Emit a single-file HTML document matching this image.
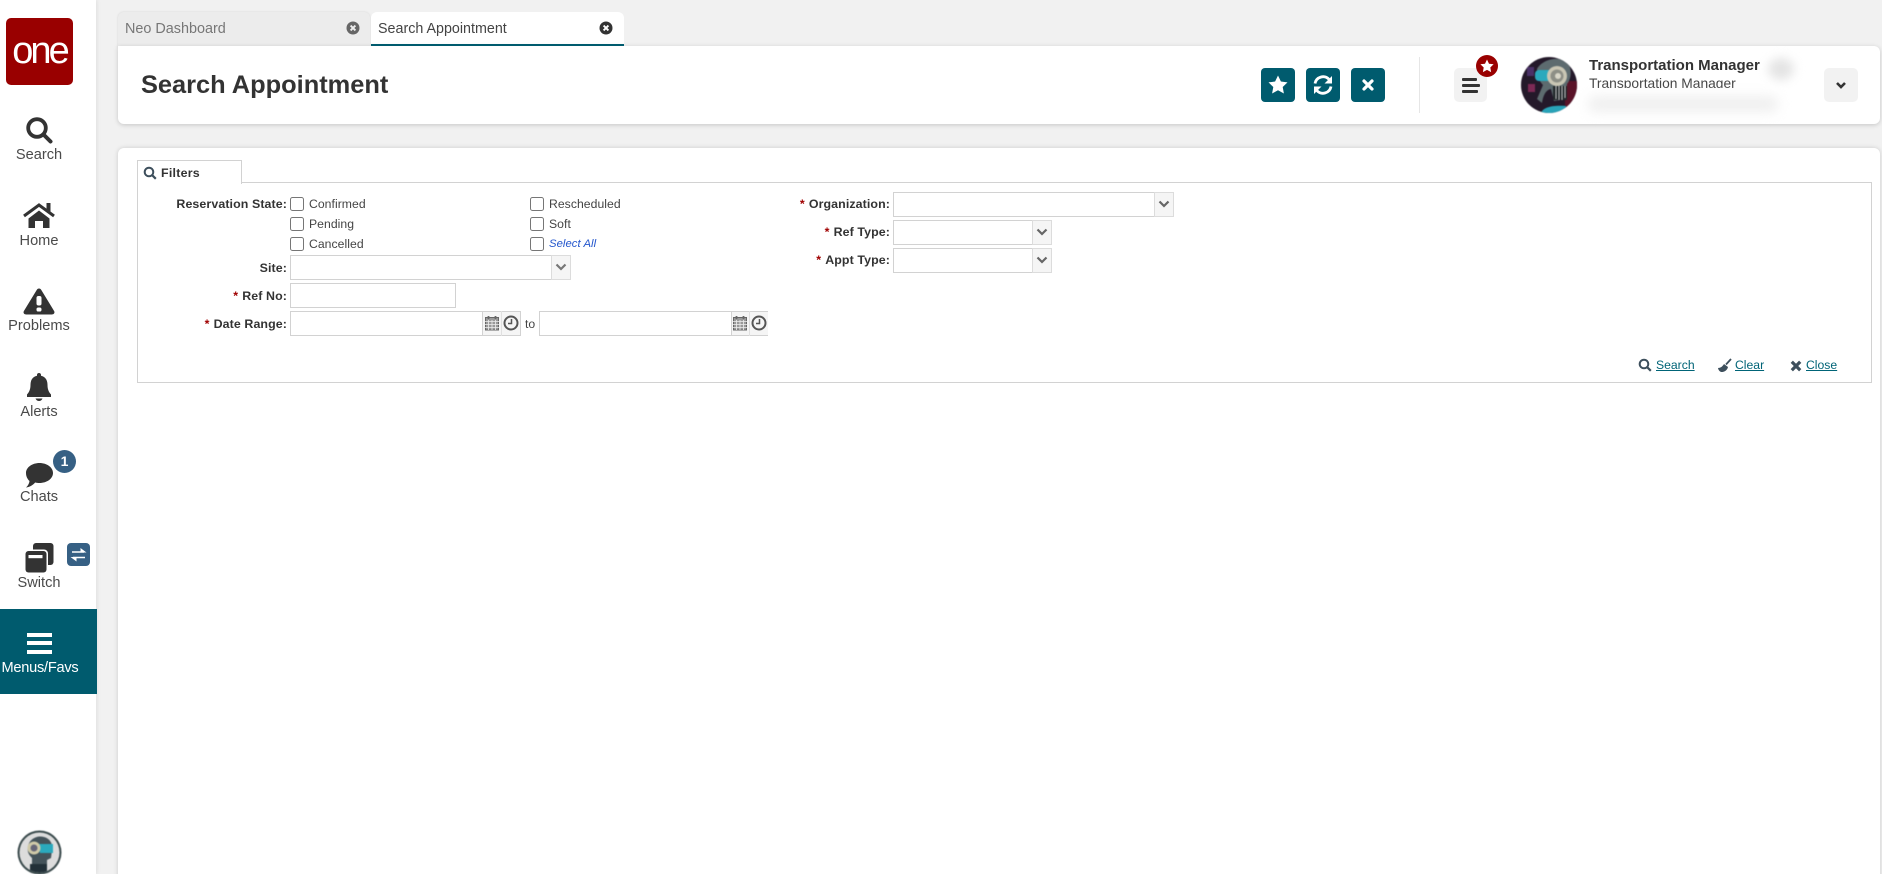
<!DOCTYPE html>
<html><head><meta charset="utf-8"><title>Search Appointment</title>
<style>
html,body{margin:0;padding:0;width:1882px;height:874px;overflow:hidden;background:#f1f1f1;font-family:"Liberation Sans",Arial,sans-serif;color:#333}
div,span,a,svg{position:absolute;white-space:nowrap}
#page{left:0;top:0;width:1882px;height:874px;overflow:hidden;background:#f1f1f1}
.side{left:0;top:0;width:96px;height:874px;background:#fff;box-shadow:1px 0 4px rgba(0,0,0,.08)}
.nl{left:0;width:78px;text-align:center;font-size:14.6px;line-height:18px;color:#4a4a4a}
.lb{font-size:12.4px;line-height:16px;font-weight:bold;color:#333;text-align:right;letter-spacing:.1px}
.lb i{color:#a00000;font-style:normal;margin-right:4px}
.ck{width:12px;height:12px;border:1px solid #767676;border-radius:2.5px;background:#fff}
.cl{font-size:12.2px;line-height:16px;color:#444;letter-spacing:.05px}
.inp{background:#fff;border:1px solid #d2d2d2;box-sizing:border-box;height:25px}
.btn{top:-1px;bottom:-1px;background:#f5f5f5;border:1px solid #dcdcdc;box-sizing:border-box;right:-1px;width:20px}
.tb{width:34px;height:34px;top:68px;border-radius:4px;background:#005b6e}
.lk{font-size:12.2px;line-height:16px;color:#006477;text-decoration:underline;top:357px}
</style></head><body>
<div id="page">

<!-- tabs -->
<div style="left:118px;top:12px;width:252px;height:36px;background:#ececec;border-radius:6px 6px 0 0;box-shadow:0 0 2px rgba(0,0,0,.12)"></div>
<div style="left:125px;top:20px;font-size:14.4px;line-height:18px;color:#777">Neo Dashboard</div>
<svg style="left:346px;top:21px" width="14" height="14" viewBox="0 0 14 14"><circle cx="7" cy="7" r="6.5" fill="#666"/><path d="M4.600 4.600l4.800 4.800M9.400 4.600l-4.800 4.800" stroke="#eee" stroke-width="1.900"/></svg>
<div style="left:371px;top:12px;width:253px;height:34px;background:#fff;border-radius:6px 6px 0 0"></div>
<div style="left:378px;top:20px;font-size:14.3px;line-height:18px;color:#444">Search Appointment</div>
<svg style="left:599px;top:21px" width="14" height="14" viewBox="0 0 14 14"><circle cx="7" cy="7" r="6.500" fill="#333"/><path d="M4.600 4.600l4.800 4.800M9.400 4.600l-4.800 4.800" stroke="#fff" stroke-width="1.900"/></svg>

<!-- header -->
<div style="left:118px;top:46px;width:1762px;height:78px;background:#fff;border-radius:0 6px 6px 6px;box-shadow:0 1px 5px rgba(0,0,0,.18)"></div>
<div style="left:371px;top:44px;width:253px;height:2px;background:#005b6e"></div>
<div style="left:141px;top:69px;font-size:25.4px;line-height:32px;font-weight:bold;color:#333">Search Appointment</div>

<div class="tb" style="left:1261px"></div>
<svg style="left:1261px;top:68px" width="34" height="34" viewBox="0 0 34 34"><path d="M17 7.500l2.900 6 6.600.9-4.800 4.600 1.200 6.500-5.900-3.200-5.900 3.200 1.200-6.500-4.800-4.600 6.600-.9z" fill="#fff"/></svg>
<div class="tb" style="left:1306px"></div>
<svg style="left:1306px;top:68px" width="34" height="34" viewBox="0 0 34 34" fill="none"><path d="M9 15.500a8.200 8.200 0 0 1 14-4.200l2 2" stroke="#fff" stroke-width="2.800"/><path d="M26 8v7.500h-7.500z" fill="#fff"/><path d="M25 18.500a8.200 8.200 0 0 1-14 4.200l-2-2" stroke="#fff" stroke-width="2.800"/><path d="M8 26v-7.500h7.500z" fill="#fff"/></svg>
<div class="tb" style="left:1351px"></div>
<svg style="left:1351px;top:68px" width="34" height="34" viewBox="0 0 34 34"><path d="M13 13l8 8M21 13l-8 8" stroke="#fff" stroke-width="3.200" stroke-linecap="round"/></svg>

<div style="left:1419px;top:57px;width:1px;height:56px;background:#e6e6e6"></div>

<div style="left:1454px;top:68px;width:33px;height:34px;border-radius:5px;background:#f2f2f2"></div>
<div style="left:1462px;top:78px;width:15px;height:3px;background:#333;border-radius:1px"></div>
<div style="left:1462px;top:84px;width:18px;height:3px;background:#333;border-radius:1px"></div>
<div style="left:1462px;top:90px;width:16px;height:3px;background:#333;border-radius:1px"></div>
<div style="left:1476px;top:55px;width:22px;height:22px;border-radius:50%;background:#990000"></div>
<svg style="left:1476px;top:55px" width="22" height="22" viewBox="0 0 22 22"><path d="M11 4.500l2 4.200 4.600.6-3.300 3.200.8 4.600-4.100-2.200-4.100 2.200.8-4.600-3.300-3.200 4.600-.6z" fill="#fff"/></svg>

<!-- avatar -->
<svg style="left:1521px;top:57px;filter:blur(.5px)" width="56" height="56" viewBox="0 0 56 56">
<defs><clipPath id="c1"><circle cx="28" cy="28" r="28"/></clipPath></defs>
<g clip-path="url(#c1)">
<rect width="56" height="56" fill="#24192a"/>
<rect x="6" y="10" width="7" height="9" fill="#4a3168"/><rect x="7" y="27" width="7" height="8" fill="#7c2a55"/>
<rect x="44" y="24" width="12" height="32" fill="#5a1328"/>
<path d="M16 12C22 1 42-2 48 8c3 6 2 14-2 19l-1 15-12 2-3-12c-6 1-8 8-9 14l-5-4 6-14c-3-3-6-8-6-16z" fill="#5d6b6f"/>
<rect x="14" y="13" width="18" height="11" rx="4" fill="#2aa9bd"/>
<circle cx="36" cy="19" r="10" fill="#c9c6b4"/><circle cx="36" cy="19" r="6.500" fill="#8d8f86"/><circle cx="37" cy="19" r="3" fill="#d8d6c8"/>
<path d="M32 29h14v14H32z" fill="#242a2c"/><path d="M35 29v13M38 29v14M41 29v14M44 29v12" stroke="#c4c4c4" stroke-width="1"/>
<path d="M20 56c2-6 12-8 25-7v7z" fill="#29a3b8"/>
</g></svg>

<div style="left:1589px;top:57px;font-size:15px;line-height:18px;font-weight:bold;color:#333">Transportation Manager</div>
<div style="left:1589px;top:75px;font-size:13.8px;line-height:18px;color:#444">Transportation Manager</div>
<div style="left:1760px;top:56px;width:48px;height:26px;background:#fff"></div>
<div style="left:1768px;top:58px;width:26px;height:22px;background:#e4e4e4;border-radius:50%;filter:blur(5px)"></div>
<div style="left:1583px;top:88px;width:205px;height:32px;background:#fff"></div>
<div style="left:1588px;top:96px;width:190px;height:16px;background:#efefef;border-radius:7px;filter:blur(6px)"></div>

<div style="left:1824px;top:68px;width:34px;height:34px;border-radius:5px;background:#f2f2f2"></div>
<svg style="left:1824px;top:68px" width="34" height="34" viewBox="0 0 34 34" fill="none"><path d="M13 15l4 4 4-4" stroke="#333" stroke-width="2.600"/></svg>

<!-- main panel -->
<div style="left:118px;top:148px;width:1762px;height:740px;background:#fff;border-radius:6px;box-shadow:0 0 5px rgba(0,0,0,.16)"></div>

<!-- filter box -->
<div style="left:137px;top:182px;width:1733px;height:199px;border:1px solid #d2d2d2"></div>
<div style="left:137px;top:160px;width:103px;height:23px;background:#fff;border:1px solid #d2d2d2;border-bottom:none"></div>
<svg style="left:143px;top:166px" width="14" height="14" viewBox="0 0 14 14" fill="none"><circle cx="6" cy="6" r="4.300" stroke="#3d4f5c" stroke-width="2"/><path d="M9.200 9.200l3.600 3.600" stroke="#3d4f5c" stroke-width="2.200"/></svg>
<div style="left:161px;top:165px;font-size:12.4px;line-height:16px;font-weight:bold;color:#333;letter-spacing:.25px">Filters</div>

<div class="lb" style="right:1595px;top:196px">Reservation State:</div>
<div class="ck" style="left:290px;top:197px"></div><div class="cl" style="left:309px;top:196px">Confirmed</div>
<div class="ck" style="left:290px;top:217px"></div><div class="cl" style="left:309px;top:216px">Pending</div>
<div class="ck" style="left:290px;top:237px"></div><div class="cl" style="left:309px;top:236px">Cancelled</div>
<div class="ck" style="left:530px;top:197px"></div><div class="cl" style="left:549px;top:196px">Rescheduled</div>
<div class="ck" style="left:530px;top:217px"></div><div class="cl" style="left:549px;top:216px">Soft</div>
<div class="ck" style="left:530px;top:237px"></div><div class="cl" style="left:549px;top:236px;color:#2255cc;font-style:italic;font-size:11.300px">Select All</div>

<div class="lb" style="right:1595px;top:260px">Site:</div>
<div class="inp" style="left:290px;top:255px;width:281px"><div class="btn"></div></div>
<svg style="left:552px;top:261px" width="18" height="12" viewBox="0 0 18 12" fill="none"><path d="M4.500 3.500l4.500 4.500 4.500-4.500" stroke="#777" stroke-width="2.200"/></svg>

<div class="lb" style="right:1595px;top:288px"><i>*</i>Ref No:</div>
<div class="inp" style="left:290px;top:283px;width:166px"></div>

<div class="lb" style="right:1595px;top:316px"><i>*</i>Date Range:</div>
<div class="inp" style="left:290px;top:311px;width:193px"></div>
<div style="left:482px;top:311px;width:39px;height:25px;background:#f5f5f5;border:1px solid #d2d2d2;box-sizing:border-box"></div>
<div style="left:501px;top:311px;width:1px;height:25px;background:#e0e0e0"></div>
<svg style="left:485px;top:315px" width="14" height="16" viewBox="0 0 14 16" fill="none"><rect x=".5" y="2.500" width="13" height="12.500" fill="#999" stroke="#666"/><path d="M0 6.500h14M0 9.500h14M0 12.500h14M3.500 5v10M7 5v10M10.500 5v10" stroke="#eee" stroke-width=".8"/><path d="M3.500 1v3M10.500 1v3" stroke="#666" stroke-width="1.800"/></svg>
<svg style="left:503px;top:315px" width="16" height="16" viewBox="0 0 16 16" fill="none"><circle cx="8" cy="8" r="6.500" stroke="#555" stroke-width="2"/><path d="M8.500 4v4.500H5" stroke="#555" stroke-width="1.500"/></svg>
<div class="cl" style="left:525px;top:316px">to</div>
<div class="inp" style="left:539px;top:311px;width:193px"></div>
<div style="left:731px;top:311px;width:37px;height:25px;background:#f5f5f5;border:1px solid #d2d2d2;border-right:none;box-sizing:border-box"></div>
<div style="left:749px;top:311px;width:1px;height:25px;background:#e0e0e0"></div>
<svg style="left:733px;top:315px" width="14" height="16" viewBox="0 0 14 16" fill="none"><rect x=".5" y="2.500" width="13" height="12.500" fill="#999" stroke="#666"/><path d="M0 6.500h14M0 9.500h14M0 12.500h14M3.500 5v10M7 5v10M10.500 5v10" stroke="#eee" stroke-width=".8"/><path d="M3.500 1v3M10.500 1v3" stroke="#666" stroke-width="1.800"/></svg>
<svg style="left:751px;top:315px" width="16" height="16" viewBox="0 0 16 16" fill="none"><circle cx="8" cy="8" r="6.500" stroke="#555" stroke-width="2"/><path d="M8.500 4v4.500H5" stroke="#555" stroke-width="1.500"/></svg>

<div class="lb" style="right:992px;top:196px"><i>*</i>Organization:</div>
<div class="inp" style="left:893px;top:192px;width:281px"><div class="btn"></div></div>
<svg style="left:1155px;top:198px" width="18" height="12" viewBox="0 0 18 12" fill="none"><path d="M4.500 3.500l4.500 4.500 4.500-4.500" stroke="#666" stroke-width="2.200"/></svg>
<div class="lb" style="right:992px;top:224px"><i>*</i>Ref Type:</div>
<div class="inp" style="left:893px;top:220px;width:159px"><div class="btn"></div></div>
<svg style="left:1033px;top:226px" width="18" height="12" viewBox="0 0 18 12" fill="none"><path d="M4.500 3.500l4.500 4.500 4.500-4.500" stroke="#666" stroke-width="2.200"/></svg>
<div class="lb" style="right:992px;top:252px"><i>*</i>Appt Type:</div>
<div class="inp" style="left:893px;top:248px;width:159px"><div class="btn"></div></div>
<svg style="left:1033px;top:254px" width="18" height="12" viewBox="0 0 18 12" fill="none"><path d="M4.500 3.500l4.500 4.500 4.500-4.500" stroke="#666" stroke-width="2.200"/></svg>

<!-- actions -->
<svg style="left:1638px;top:358px" width="14" height="14" viewBox="0 0 14 14" fill="none"><circle cx="6" cy="6" r="4.300" stroke="#3d4f5c" stroke-width="2"/><path d="M9.200 9.200l3.600 3.600" stroke="#3d4f5c" stroke-width="2.200"/></svg>
<a class="lk" style="left:1656px">Search</a>
<svg style="left:1717px;top:358px" width="16" height="15" viewBox="0 0 16 15"><path d="M14 1L9 6.500" stroke="#3d4f5c" stroke-width="1.800"/><path d="M1 10c2.500 0 4.500-1.500 6-4l4 3c-.5 2.500-2.500 4.500-5.500 5C3 14.200 1.500 12.500 1 10z" fill="#3d4f5c"/></svg>
<a class="lk" style="left:1735px">Clear</a>
<svg style="left:1790px;top:360px" width="12" height="12" viewBox="0 0 12 12"><path d="M1.800 1.800l8.400 8.400M10.200 1.800l-8.400 8.400" stroke="#3d4f5c" stroke-width="3.200"/></svg>
<a class="lk" style="left:1806px">Close</a>

<!-- sidebar -->
<div class="side"></div>
<div style="left:6px;top:18px;width:67px;height:67px;background:#990000;border-radius:5px"></div>
<div style="left:6px;top:29px;width:67px;text-align:center;font-size:38px;line-height:44px;color:#fff;letter-spacing:-3px">one</div>

<svg style="left:25px;top:116px" width="28" height="28" viewBox="0 0 28 28" fill="none"><circle cx="12" cy="12" r="8.800" stroke="#333" stroke-width="3.800"/><path d="M18.500 18.500l7 7" stroke="#333" stroke-width="4" stroke-linecap="round"/></svg>
<div class="nl" style="top:146px">Search</div>

<svg style="left:23px;top:203px" width="32" height="25" viewBox="0 0 32 25"><path d="M1 13L16 2l15 11" fill="none" stroke="#333" stroke-width="3"/><path d="M23.500 0h4v9l-4-3z" fill="#333"/><path d="M5.500 15.500L16 7.500l10.500 8V25H20v-7h-8v7H5.500z" fill="#333"/></svg>
<div class="nl" style="top:232px">Home</div>

<svg style="left:23px;top:288px" width="32" height="27" viewBox="0 0 32 27"><path d="M16 .5c1 0 1.800.6 2.300 1.500l12.800 21c1 1.800-.2 3.500-2.200 3.500H3.100c-2 0-3.200-1.700-2.200-3.500L13.700 2c.5-.9 1.300-1.500 2.300-1.500z" fill="#333"/><rect x="13.500" y="8" width="5" height="9.500" rx="2" fill="#fff"/><rect x="13.500" y="19.500" width="5" height="4" rx="1.800" fill="#fff"/></svg>
<div class="nl" style="top:317px">Problems</div>

<svg style="left:26px;top:372px" width="26" height="30" viewBox="0 0 26 30"><path d="M13 1c1.200 0 2 .8 2 1.800v1c4.500 1 6.500 4.500 6.500 9 0 5 1.500 7.500 3.500 9.700V25H1v-2.500c2-2.200 3.500-4.700 3.500-9.700 0-4.500 2-8 6.500-9v-1c0-1 .8-1.800 2-1.800z" fill="#333"/><path d="M9.500 26.500h7c-.5 1.500-2 2.500-3.500 2.500s-3-1-3.500-2.500z" fill="#333"/></svg>
<div class="nl" style="top:403px">Alerts</div>

<svg style="left:25px;top:462px" width="29" height="26" viewBox="0 0 29 26"><path d="M14.500 1C22 1 28 5.500 28 11s-6 10-13.500 10c-1.500 0-3-.2-4.300-.5C8 23 5 25 1 25.500c2-1.800 3.200-4 3.500-6.500C2.300 17 1 14.200 1 11 1 5.500 7 1 14.500 1z" fill="#333"/></svg>
<div style="left:53px;top:450px;width:23px;height:23px;border-radius:50%;background:#366084"></div>
<div style="left:53px;top:451px;width:23px;text-align:center;font-size:14px;line-height:20px;font-weight:bold;color:#fff">1</div>
<div class="nl" style="top:488px">Chats</div>

<svg style="left:25px;top:543px" width="29" height="30" viewBox="0 0 29 30"><rect x="8" y="0" width="20.500" height="22" rx="3" fill="#333"/><rect x="-1" y="6.500" width="24" height="24.500" rx="4" fill="#fff"/><rect x="0.500" y="8" width="21" height="21.500" rx="3" fill="#333"/><rect x="3.500" y="12" width="14" height="3.200" fill="#fff"/></svg>
<div style="left:67px;top:543px;width:23px;height:23px;border-radius:4px;background:#366084"></div>
<svg style="left:67px;top:543px" width="23" height="23" viewBox="0 0 23 23" fill="none"><path d="M5 9h12M6 14.500h12" stroke="#fff" stroke-width="1.600"/><path d="M14 6l4 3-4 0zM9 17.500l-4-3 4 0z" fill="#fff" stroke="#fff"/></svg>
<div class="nl" style="top:574px">Switch</div>

<div style="left:0;top:609px;width:97px;height:85px;background:#005b6e"></div>
<div style="left:27px;top:633px;width:25px;height:4px;background:#fff"></div>
<div style="left:27px;top:641px;width:25px;height:4px;background:#fff"></div>
<div style="left:27px;top:650px;width:25px;height:4px;background:#fff"></div>
<div class="nl" style="top:659px;color:#fff;left:0;width:80px;letter-spacing:-.25px">Menus/Favs</div>

<svg style="left:17px;top:830px;filter:blur(.4px)" width="45" height="45" viewBox="0 0 45 45">
<defs><clipPath id="c2"><circle cx="22.500" cy="22.500" r="20"/></clipPath></defs>
<circle cx="22.500" cy="22.500" r="22" fill="#3a4a4c"/>
<circle cx="22.500" cy="22.500" r="20" fill="#dcdcdc"/>
<g clip-path="url(#c2)">
<path d="M11 17c1-8 9-12 16-10 7 2 9 8 8 13l-1 8-4 2v6H15v-8c-3-3-5-6-4-11z" fill="#44535a"/>
<path d="M21 14h15v9H23z" fill="#2aa9bd"/>
<circle cx="17" cy="18" r="6.500" fill="#cfc9a8"/><circle cx="17" cy="18" r="3.500" fill="#667"/>
<rect x="13" y="34" width="17" height="10" fill="#223038"/>
</g></svg>

</div>
</body></html>
